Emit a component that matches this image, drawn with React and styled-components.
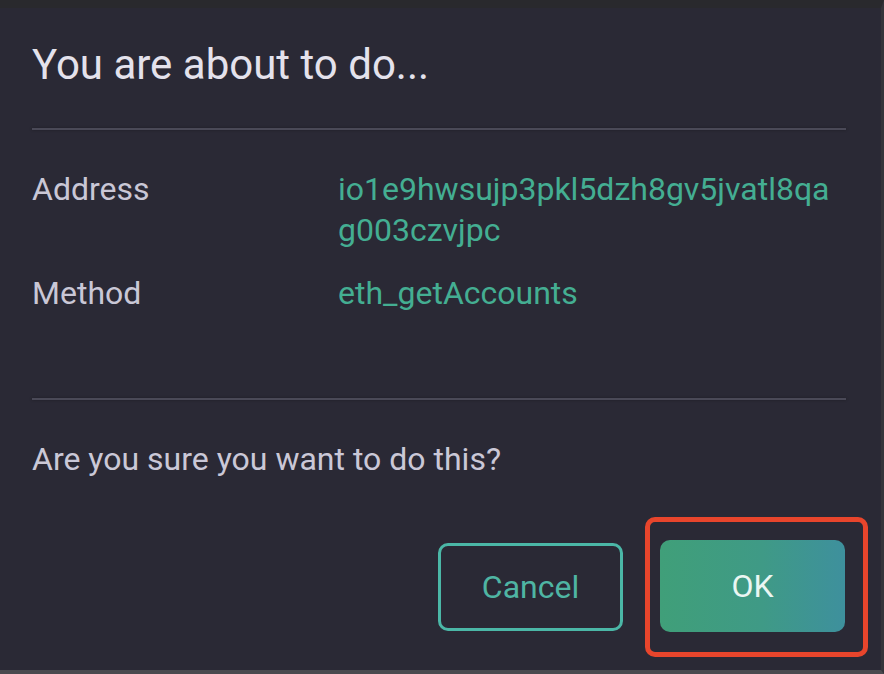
import React from "react";
import styled, { createGlobalStyle } from "styled-components";

const GlobalStyle = createGlobalStyle`
  html, body {
    margin: 0;
    padding: 0;
    background: #2a2935;
  }
  * {
    box-sizing: border-box;
  }
`;

const Frame = styled.div`
  width: 884px;
  height: 674px;
  background: #2a2935;
  border-top: 8px solid #29292d;
  border-right: 3px solid #34343a;
  border-bottom: 4px solid #4a4a4f;
  padding: 32px 35px 0 32px;
  font-family: Roboto, "Liberation Sans", Arial, sans-serif;
  display: flex;
  flex-direction: column;
  overflow: hidden;
`;

const Title = styled.h1`
  margin: 0;
  font-size: 42px;
  font-weight: 400;
  line-height: 49px;
  color: #e4e2ec;
`;

const Divider = styled.div`
  height: 2px;
  background: #4a4957;
  box-shadow: 0 0 3px rgba(0, 0, 0, 0.35);
  margin-top: ${(p) => p.$top}px;
`;

const Details = styled.div`
  display: grid;
  grid-template-columns: 306px 496px;
  row-gap: 22px;
  padding-top: 39px;
`;

const Label = styled.div`
  font-size: 32px;
  line-height: 41px;
  color: #c9c7d6;
`;

const Value = styled.div`
  font-size: 32px;
  line-height: 41px;
  color: #44ae92;
  word-break: break-all;
`;

const Question = styled.p`
  margin: 39px 0 0;
  font-size: 32px;
  line-height: 41px;
  color: #cac8d7;
`;

const Actions = styled.div`
  display: flex;
  justify-content: flex-end;
  align-items: center;
  gap: 22px;
  margin-top: 37px;
  margin-right: -22px;
`;

const Button = styled.button`
  width: 185px;
  height: ${(p) => (p.$primary ? 92 : 88)}px;
  border-radius: 10px;
  font-family: Roboto, "Liberation Sans", Arial, sans-serif;
  font-size: 32px;
  cursor: pointer;
  border: ${(p) => (p.$primary ? "none" : "3px solid #4bb7a7")};
  background: ${(p) =>
    p.$primary ? "linear-gradient(90deg, #409f79 0%, #3f9a86 55%, #3e909d 100%)" : "transparent"};
  color: ${(p) => (p.$primary ? "#eaf6f2" : "#4fb5a3")};
`;

const Highlight = styled.div`
  border: 5px solid #e8452c;
  border-radius: 10px;
  padding: 18px 18px 20px 10px;
`;

export default function App() {
  return (
    <>
      <GlobalStyle />
      <Frame>
        <Title>You are about to do...</Title>
        <Divider $top={39} />
        <Details>
          <Label>Address</Label>
          <Value>io1e9hwsujp3pkl5dzh8gv5jvatl8qag003czvjpc</Value>
          <Label>Method</Label>
          <Value>eth_getAccounts</Value>
        </Details>
        <Divider $top={84} />
        <Question>Are you sure you want to do this?</Question>
        <Actions>
          <Button>Cancel</Button>
          <Highlight>
            <Button $primary>OK</Button>
          </Highlight>
        </Actions>
      </Frame>
    </>
  );
}
